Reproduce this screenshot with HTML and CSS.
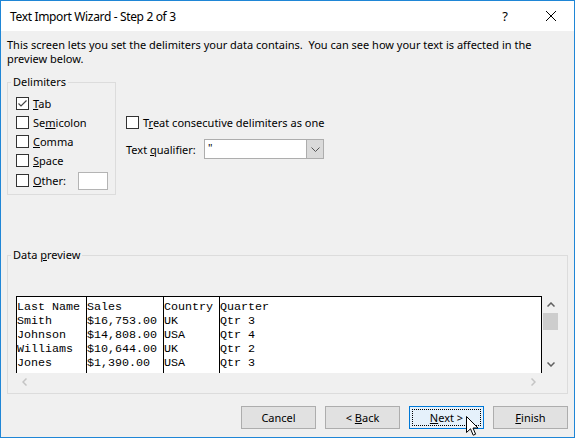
FILE: index.html
```html
<!DOCTYPE html>
<html lang="en">
<head>
<meta charset="utf-8">
<title>Text Import Wizard - Step 2 of 3</title>
<link rel="stylesheet" href="styles.css">
</head>
<body>
<div class="window">
  <header class="titlebar">
    <span class="title">Text Import Wizard - Step 2 of 3</span>
    <div class="caption-btns">
      <span class="cap-btn help">?</span>
      <span class="cap-btn">
        <svg width="10" height="10" viewBox="0 0 10 10"><path d="M0 0L10 10M10 0L0 10" stroke="#000" stroke-width="1"/></svg>
      </span>
    </div>
  </header>

  <main class="body">
    <p class="intro">This screen lets you set the delimiters your data contains.&nbsp; You can see how your text is affected in the<br>preview below.</p>

    <div class="options">
      <fieldset class="group delims">
        <legend>Delimiters</legend>
        <div class="delim-list">
          <label class="check">
            <span class="box"><svg width="11" height="11" viewBox="0 0 11 11"><path d="M1.5 5.5L4 8L9.5 2.5" fill="none" stroke="#444" stroke-width="1.2"/></svg></span>
            <span><u>T</u>ab</span>
          </label>
          <label class="check"><span class="box"></span><span>Se<u>m</u>icolon</span></label>
          <label class="check"><span class="box"></span><span><u>C</u>omma</span></label>
          <label class="check"><span class="box"></span><span><u>S</u>pace</span></label>
          <label class="check other"><span class="box"></span><span><u>O</u>ther:</span><span class="textbox"></span></label>
        </div>
      </fieldset>

      <div class="side">
        <label class="check"><span class="box"></span><span>T<u>r</u>eat consecutive delimiters as one</span></label>
        <div class="qualifier">
          <span class="q-label">Text <u>q</u>ualifier:</span>
          <div class="combo">
            <span class="combo-value">"</span>
            <span class="combo-btn">
              <svg width="9" height="5" viewBox="0 0 9 5"><path d="M0.5 0.5L4.5 4.5L8.5 0.5" fill="none" stroke="#555" stroke-width="1"/></svg>
            </span>
          </div>
        </div>
      </div>
    </div>

    <fieldset class="group preview">
      <legend>Data <u>p</u>review</legend>
      <div class="preview-inner">
        <div class="preview-main">
          <div class="grid">
            <div class="col c1"><div>Last Name</div><div>Smith</div><div>Johnson</div><div>Williams</div><div>Jones</div></div>
            <div class="col c2"><div>Sales</div><div>$16,753.00</div><div>$14,808.00</div><div>$10,644.00</div><div>$1,390.00</div></div>
            <div class="col c3"><div>Country</div><div>UK</div><div>USA</div><div>UK</div><div>USA</div></div>
            <div class="col c4"><div>Quarter</div><div>Qtr 3</div><div>Qtr 4</div><div>Qtr 2</div><div>Qtr 3</div></div>
          </div>
          <div class="vscroll">
            <span class="arrow">
              <svg width="8" height="5" viewBox="0 0 8 5"><path d="M0.5 4.5L4 1L7.5 4.5" fill="none" stroke="#606060" stroke-width="1.5"/></svg>
            </span>
            <span class="thumb"></span>
            <span class="track"></span>
            <span class="arrow">
              <svg width="8" height="5" viewBox="0 0 8 5"><path d="M0.5 0.5L4 4L7.5 0.5" fill="none" stroke="#606060" stroke-width="1.5"/></svg>
            </span>
          </div>
        </div>
        <div class="hscroll">
          <span class="arrow">
            <svg width="5" height="8" viewBox="0 0 5 8"><path d="M4.5 0.5L1 4L4.5 7.5" fill="none" stroke="#c4c4c4" stroke-width="1.5"/></svg>
          </span>
          <span class="arrow">
            <svg width="5" height="8" viewBox="0 0 5 8"><path d="M0.5 0.5L4 4L0.5 7.5" fill="none" stroke="#c4c4c4" stroke-width="1.5"/></svg>
          </span>
        </div>
      </div>
    </fieldset>

    <div class="buttons">
      <button class="btn">Cancel</button>
      <button class="btn">&lt; <u>B</u>ack</button>
      <button class="btn default"><u>N</u>ext &gt;</button>
      <button class="btn"><u>F</u>inish</button>
    </div>
  </main>

  <svg class="cursor" width="13" height="21" viewBox="0 0 13 21">
    <path d="M0.5 0.5L0.5 16.5L4.5 12.8L7.2 19.2L9.6 18.2L7 12L12 12Z" fill="#fff" stroke="#000" stroke-width="1" stroke-linejoin="miter"/>
  </svg>
</div>
</body>
</html>
```

FILE: styles.css
```css
* {
  box-sizing: border-box;
}

html, body {
  margin: 0;
  padding: 0;
  background: #f0f0f0;
}

body {
  font-family: "Noto Sans", "Liberation Sans", sans-serif;
  font-size: 11px;
  color: #000;
}

.window {
  position: relative;
  width: 575px;
  height: 438px;
  border: 1px solid #1f86d6;
  background: #f0f0f0;
  display: flex;
  flex-direction: column;
  overflow: hidden;
}

/* title bar */
.titlebar {
  height: 30px;
  flex: none;
  background: #fff;
  display: flex;
  align-items: center;
  justify-content: space-between;
  padding-left: 9px;
}

.title {
  font-size: 12px;
  letter-spacing: -0.35px;
}

.caption-btns {
  display: flex;
  height: 100%;
}

.cap-btn {
  width: 46px;
  height: 100%;
  display: flex;
  align-items: center;
  justify-content: center;
}

.help {
  font-size: 13px;
}

/* dialog body */
.body {
  flex: 1;
  display: flex;
  flex-direction: column;
  padding: 7px 6px 0 6px;
}

.intro {
  margin: 0;
  line-height: 14px;
}

.options {
  display: flex;
  gap: 10px;
  margin-top: 9px;
}

.group {
  margin: 0;
  padding: 0;
  min-width: 0;
  border: 1px solid #dcdcdc;
}

.group legend {
  padding: 0 2px;
  margin-left: 3px;
  line-height: 14px;
}

.delims {
  width: 109px;
  flex: none;
}

.delim-list {
  display: flex;
  flex-direction: column;
  padding: 5px 7px 3px 8px;
}

.check {
  display: flex;
  align-items: center;
  gap: 4px;
  height: 19px;
  white-space: nowrap;
}

.check.other {
  height: 21px;
}

.box {
  width: 13px;
  height: 13px;
  flex: none;
  border: 1px solid #333;
  background: #fff;
  display: flex;
  align-items: center;
  justify-content: center;
}

.textbox {
  width: 30px;
  height: 18px;
  margin-left: auto;
  border: 1px solid #b4b4b4;
  background: #fff;
}

.side {
  padding-top: 38px;
  display: flex;
  flex-direction: column;
}

.qualifier {
  display: flex;
  align-items: center;
  margin-top: 7px;
}

.q-label {
  width: 78px;
  flex: none;
}

.combo {
  width: 120px;
  height: 20px;
  border: 1px solid #adadad;
  background: #fff;
  display: flex;
}

.combo-value {
  flex: 1;
  padding-left: 3px;
  line-height: 16px;
}

.combo-btn {
  width: 17px;
  background: #dadada;
  border-left: 1px solid #adadad;
  display: flex;
  align-items: center;
  justify-content: center;
}

/* data preview */
.preview {
  margin-top: 53px;
}

.preview-inner {
  padding: 34px 8px 3px 8px;
}

.preview-main {
  display: flex;
}

.grid {
  width: 526px;
  height: 77px;
  border: 1px solid #000;
  border-bottom: 0;
  background: #fff;
  display: flex;
  overflow: hidden;
  font-family: "Liberation Mono", "Courier New", monospace;
  font-size: 11.7px;
  line-height: 14px;
  white-space: nowrap;
}

.col {
  padding-top: 3px;
  overflow: hidden;
  flex: none;
}

.c1 { width: 69px; }
.c2 { width: 77px; border-left: 1px solid #000; }
.c3 { width: 56px; border-left: 1px solid #000; }
.c4 { flex: 1; border-left: 1px solid #000; }

.vscroll {
  width: 17px;
  height: 77px;
  display: flex;
  flex-direction: column;
}

.vscroll .arrow {
  height: 17px;
  display: flex;
  align-items: center;
  justify-content: center;
}

.thumb {
  height: 17px;
  width: 15px;
  margin-left: 1px;
  background: #cdcdcd;
}

.track {
  flex: 1;
}

.hscroll {
  width: 526px;
  height: 17px;
  display: flex;
  justify-content: space-between;
}

.hscroll .arrow {
  width: 17px;
  display: flex;
  align-items: center;
  justify-content: center;
}

/* command buttons */
.buttons {
  display: flex;
  justify-content: flex-end;
  gap: 9px;
  margin-top: 12px;
}

.btn {
  width: 75px;
  height: 23px;
  padding: 0;
  border: 1px solid #adadad;
  background: #e1e1e1;
  font-family: inherit;
  font-size: 11px;
  color: #000;
}

.btn.default {
  border-color: #0078d7;
  background: #e5f1fb;
  outline: 1px dotted #000;
  outline-offset: -4px;
}

.cursor {
  position: absolute;
  left: 465px;
  top: 415px;
}
```
